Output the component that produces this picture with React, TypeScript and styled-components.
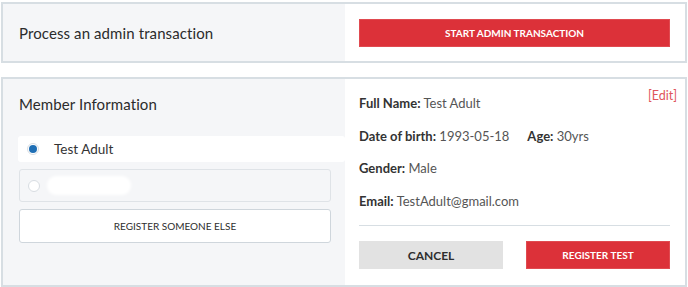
import styled, { createGlobalStyle } from 'styled-components';

const GlobalStyle = createGlobalStyle`
    body {
        margin: 0;
        background: #ffffff;
        font-family: Lato, 'Noto Sans', sans-serif;
        color: #333;
    }
    * {
        box-sizing: border-box;
    }
`;

const Page = styled.div`
    display: flex;
    flex-direction: column;
    gap: 14px;
    padding: 2px 1px 0 1px;
    width: 688px;
`;

const Card = styled.section<{ $height: number }>`
    display: grid;
    grid-template-columns: 342px 1fr;
    height: ${({ $height }) => $height}px;
    border: 2px solid #d7dee3;
`;

const LeftPane = styled.div<{ $center?: boolean }>`
    background: #f5f6f8;
    display: flex;
    flex-direction: column;
    justify-content: ${({ $center }) => ($center ? 'center' : 'flex-start')};
    padding: ${({ $center }) => ($center ? '0 16px' : '16px 14px 0 16px')};
`;

const RightPane = styled.div<{ $center?: boolean }>`
    background: #fff;
    display: flex;
    flex-direction: column;
    justify-content: ${({ $center }) => ($center ? 'center' : 'flex-start')};
    padding: ${({ $center }) => ($center ? '0 15px 0 14px' : '16px 15px 0 14px')};
    position: relative;
`;

const Heading = styled.h2`
    margin: 0;
    font-size: 15px;
    font-weight: 400;
    color: #2b2b2b;
    letter-spacing: 0.1px;
`;

const Button = styled.button<{ $variant: 'primary' | 'secondary' | 'outline'; $height: number }>`
    height: ${({ $height }) => $height}px;
    border: 1px solid
        ${({ $variant }) => ($variant === 'primary' ? '#e04a50' : $variant === 'outline' ? '#cfd6dc' : '#e2e2e2')};
    border-radius: ${({ $variant }) => ($variant === 'outline' ? '3px' : '0')};
    background: ${({ $variant }) => ($variant === 'primary' ? '#dc3139' : $variant === 'outline' ? '#fff' : '#e2e2e2')};
    color: ${({ $variant }) => ($variant === 'primary' ? '#fff' : '#2e2e2e')};
    font-family: Lato, 'Noto Sans', sans-serif;
    font-size: ${({ $variant }) => ($variant === 'secondary' ? '12px' : '10px')};
    font-weight: ${({ $variant }) => ($variant === 'outline' ? 400 : 700)};
    letter-spacing: 0;
    padding: 0;
    cursor: pointer;
`;

const MemberRow = styled.label<{ $selected?: boolean }>`
    display: flex;
    align-items: center;
    gap: ${({ $selected }) => ($selected ? '15px' : '7px')};
    height: ${({ $selected }) => ($selected ? '26px' : '33px')};
    margin-right: ${({ $selected }) => ($selected ? '-14px' : '0')};
    margin-left: ${({ $selected }) => ($selected ? '-1px' : '0')};
    padding-left: ${({ $selected }) => ($selected ? '9px' : '8px')};
    background: ${({ $selected }) => ($selected ? '#fff' : '#f5f6f8')};
    border: ${({ $selected }) => ($selected ? 'none' : '1px solid #dfe3e7')};
    border-radius: 3px;
    font-size: 13.5px;
    color: #333;
`;

const Radio = styled.span<{ $checked?: boolean }>`
    width: 12px;
    height: 12px;
    border-radius: 50%;
    border: 1px solid #d8dde2;
    background: #fff;
    display: flex;
    align-items: center;
    justify-content: center;

    &::after {
        content: '';
        width: 8px;
        height: 8px;
        border-radius: 50%;
        background: ${({ $checked }) => ($checked ? '#1f6fb5' : 'transparent')};
    }
`;

const Redacted = styled.span`
    width: 84px;
    height: 19px;
    border-radius: 9px;
    background: #fff;
    filter: blur(1.5px);
`;

const MemberList = styled.div`
    display: flex;
    flex-direction: column;
    gap: 7px;
    margin-top: 23px;
`;

const InfoLine = styled.p`
    margin: 0;
    height: 32.5px;
    font-size: 13px;
    color: #555;
    display: flex;
    gap: 18px;
`;

const Label = styled.span`
    color: #333;
    font-weight: 700;
`;

const EditLink = styled.a`
    position: absolute;
    top: 9px;
    right: 8px;
    color: #e0555b;
    font-size: 12.5px;
    text-decoration: none;
`;

const Divider = styled.hr`
    margin: 0 0 15px 0;
    border: none;
    border-top: 1px solid #d7dee3;
`;

const ButtonRow = styled.div`
    display: grid;
    grid-template-columns: 144px 144px;
    justify-content: space-between;
`;

const App = () => (
    <Page>
        <GlobalStyle />
        <Card $height={61}>
            <LeftPane $center>
                <Heading>Process an admin transaction</Heading>
            </LeftPane>
            <RightPane $center>
                <Button $variant='primary' $height={28}>
                    START ADMIN TRANSACTION
                </Button>
            </RightPane>
        </Card>
        <Card $height={210}>
            <LeftPane>
                <Heading>Member Information</Heading>
                <MemberList>
                    <MemberRow $selected>
                        <Radio $checked />
                        Test Adult
                    </MemberRow>
                    <MemberRow>
                        <Radio />
                        <Redacted />
                    </MemberRow>
                    <Button $variant='outline' $height={34}>
                        REGISTER SOMEONE ELSE
                    </Button>
                </MemberList>
            </LeftPane>
            <RightPane>
                <EditLink href='#'>[Edit]</EditLink>
                <InfoLine>
                    <span>
                        <Label>Full Name:</Label> Test Adult
                    </span>
                </InfoLine>
                <InfoLine>
                    <span>
                        <Label>Date of birth:</Label> 1993-05-18
                    </span>
                    <span>
                        <Label>Age:</Label> 30yrs
                    </span>
                </InfoLine>
                <InfoLine>
                    <span>
                        <Label>Gender:</Label> Male
                    </span>
                </InfoLine>
                <InfoLine>
                    <span>
                        <Label>Email:</Label> TestAdult@gmail.com
                    </span>
                </InfoLine>
                <Divider />
                <ButtonRow>
                    <Button $variant='secondary' $height={28}>
                        CANCEL
                    </Button>
                    <Button $variant='primary' $height={28}>
                        REGISTER TEST
                    </Button>
                </ButtonRow>
            </RightPane>
        </Card>
    </Page>
);

export default App;
